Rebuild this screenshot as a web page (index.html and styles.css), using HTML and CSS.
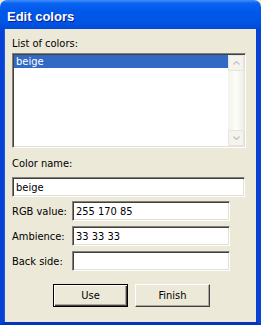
FILE: index.html
```html
<!DOCTYPE html>
<html lang="en">
<head>
    <meta charset="UTF-8">
    <title>Edit colors</title>
    <link rel="stylesheet" href="styles.css">
</head>
<body>

    <div class="window">
        <div class="titlebar">Edit colors</div>

        <div class="content">
            <div class="label">List of colors:</div>
            <div class="listbox">
                <ul class="items">
                    <li class="selected">beige</li>
                </ul>
                <div class="scrollbar">
                    <div class="sb-btn">
                        <svg width="7" height="4" viewBox="0 0 7 4"><path d="M0.5 3.5 L3.5 0.5 L6.5 3.5" fill="none" stroke="#c4c3bd" stroke-width="1.4"/></svg>
                    </div>
                    <div class="sb-track"></div>
                    <div class="sb-btn">
                        <svg width="7" height="4" viewBox="0 0 7 4"><path d="M0.5 0.5 L3.5 3.5 L6.5 0.5" fill="none" stroke="#c4c3bd" stroke-width="1.4"/></svg>
                    </div>
                </div>
            </div>

            <div class="label name-label">Color name:</div>
            <div class="field wide">beige</div>

            <div class="rows">
                <div class="row">
                    <span class="row-label">RGB value:</span>
                    <div class="field">255 170 85</div>
                </div>
                <div class="row">
                    <span class="row-label">Ambience:</span>
                    <div class="field">33 33 33</div>
                </div>
                <div class="row">
                    <span class="row-label">Back side:</span>
                    <div class="field"></div>
                </div>
            </div>

            <div class="buttons">
                <button class="default">Use</button>
                <button>Finish</button>
            </div>
        </div>
    </div>

</body>
</html>
```

FILE: styles.css
```css
body {
    margin: 0;
    padding: 0;
    background: #ece9d8;
    font-family: "DejaVu Sans Condensed", "Liberation Sans", sans-serif;
    font-size: 11px;
    color: #000;
}

.window {
    width: 261px;
    height: 325px;
    display: flex;
    flex-direction: column;
    box-sizing: border-box;
}

.titlebar {
    height: 29px;
    box-sizing: border-box;
    padding: 9px 0 0 7px;
    border-radius: 7px 7px 0 0;
    background: linear-gradient(#3e8ffd 0%, #0a62f0 12%, #0058ea 40%, #0055e5 75%, #0049d8 100%);
    color: #fff;
    font-family: "Liberation Sans", Arial, sans-serif;
    font-weight: bold;
    font-size: 13px;
    line-height: 15px;
    text-shadow: 1px 1px 0 #0a1e8c;
}

.content {
    flex: 1;
    background: #ece9d8;
    border-left: 4px solid #0842d5;
    border-right: 4px solid #0842d5;
    border-bottom: 3px solid #0633b8;
    box-shadow: inset 1px 0 0 #1a5ae8, inset -1px 0 0 #0b3fc8;
    padding: 8px 11px 0 8px;
    display: flex;
    flex-direction: column;
}

.label {
    height: 13px;
    line-height: 13px;
    white-space: nowrap;
}

.listbox {
    margin-top: 3px;
    width: 234px;
    height: 95px;
    box-sizing: border-box;
    border-top: 1px solid #828078;
    border-left: 1px solid #828078;
    border-right: 1px solid #fff;
    border-bottom: 1px solid #fff;
    box-shadow: inset 1px 1px 0 #404040, inset -1px -1px 0 #e4e1d4;
    background: #fff;
    display: flex;
    padding: 1px;
}

.items {
    flex: 1;
    list-style: none;
    margin: 0;
    padding: 0;
}

.items li {
    height: 13px;
    line-height: 13px;
    padding-left: 2px;
}

.items li.selected {
    background: #316ac5;
    color: #fff;
}

.scrollbar {
    width: 16px;
    display: flex;
    flex-direction: column;
    background: linear-gradient(90deg, #f3f1ea, #fdfdfa 50%, #eeede5);
}

.sb-btn {
    height: 16px;
    box-sizing: border-box;
    border: 1px solid #e6e4dc;
    border-radius: 2px;
    background: #f4f3ee;
    display: flex;
    align-items: center;
    justify-content: center;
}

.sb-track {
    flex: 1;
}

.name-label {
    margin-top: 9px;
}

.field {
    width: 158px;
    height: 20px;
    flex-shrink: 0;
    box-sizing: border-box;
    background: #fff;
    border-top: 1px solid #828078;
    border-left: 1px solid #828078;
    border-right: 1px solid #fff;
    border-bottom: 1px solid #fff;
    box-shadow: inset 1px 1px 0 #404040, inset -1px -1px 0 #e4e1d4;
    padding: 3px 0 0 3px;
    line-height: 13px;
    white-space: nowrap;
}

.field.wide {
    width: 233px;
    margin-top: 7px;
}

.rows {
    margin-top: 4px;
    display: flex;
    flex-direction: column;
    gap: 5px;
}

.row {
    display: flex;
    align-items: center;
}

.row-label {
    width: 60px;
    flex-shrink: 0;
    white-space: nowrap;
}

.buttons {
    margin-top: 13px;
    display: flex;
    gap: 7px;
    padding-left: 41px;
}

button {
    width: 75px;
    height: 23px;
    font-family: "DejaVu Sans Condensed", "Liberation Sans", sans-serif;
    font-size: 11px;
    color: #000;
    background: #ece9d8;
    border-top: 1px solid #fff;
    border-left: 1px solid #fff;
    border-right: 1px solid #404040;
    border-bottom: 1px solid #404040;
    box-shadow: inset -1px -1px 0 #aca899;
    padding: 0;
}

button.default {
    border: 1px solid #000;
    box-shadow: inset 1px 1px 0 #fff, inset -1px -1px 0 #404040, inset -2px -2px 0 #aca899;
}
```
